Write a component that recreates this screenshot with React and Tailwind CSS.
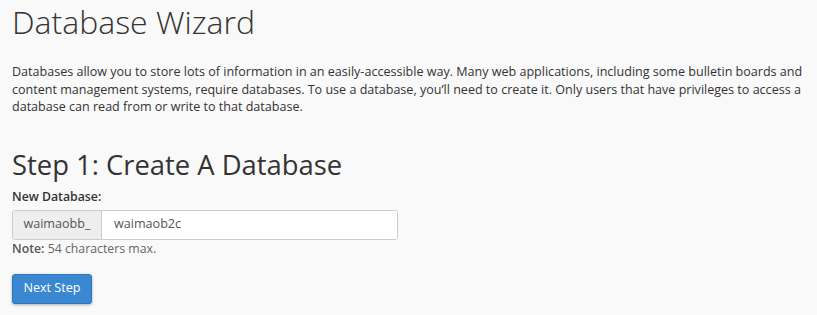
export default function App() {
  return (
    <div className="min-h-[315px] w-[817px] bg-[#f9f9f9] text-[#333] pl-3 pr-1 pt-0 overflow-hidden" style={{ fontFamily: '"Open Sans", sans-serif' }}>
      <h1 className="text-[32px] font-light leading-[43px] text-[#333]">Database Wizard</h1>
      <p className="text-[12.55px] leading-[17.5px] mt-[20px] w-[798px]">
        Databases allow you to store lots of information in an easily-accessible way. Many web applications, including some bulletin boards and content management systems, require databases. To use a database, you’ll need to create it. Only users that have privileges to access a database can read from or write to that database.
      </p>
      <h2 className="text-[27.4px] leading-[32px] mt-[33px]">Step 1: Create A Database</h2>
      <label className="block text-[12.3px] font-semibold leading-[17px] mt-[7px]">New Database:</label>
      <div className="flex w-[386px] h-[30px] mt-[5px] border border-[#ccc] rounded-[3px] overflow-hidden text-[12.6px]">
        <div className="w-[89px] bg-[#eeeeee] border-r border-[#ccc] flex items-center justify-center text-[#555]">waimaobb_</div>
        <input className="flex-1 min-w-0 bg-white px-3 text-[#555] outline-none" defaultValue="waimaob2c" />
      </div>
      <div className="text-[12.3px] leading-[17px] mt-[0px] text-[#666]"><span className="font-semibold text-[#555]">Note:</span> 54 characters max.</div>
      <button className="mt-[17px] w-[80px] h-[30px] bg-[#3a88d2] text-white text-[12.6px] rounded-[3px] border border-[#2e76bd] shadow-[0_1px_3px_rgba(0,0,0,0.3)]">Next Step</button>
    </div>
  );
}
